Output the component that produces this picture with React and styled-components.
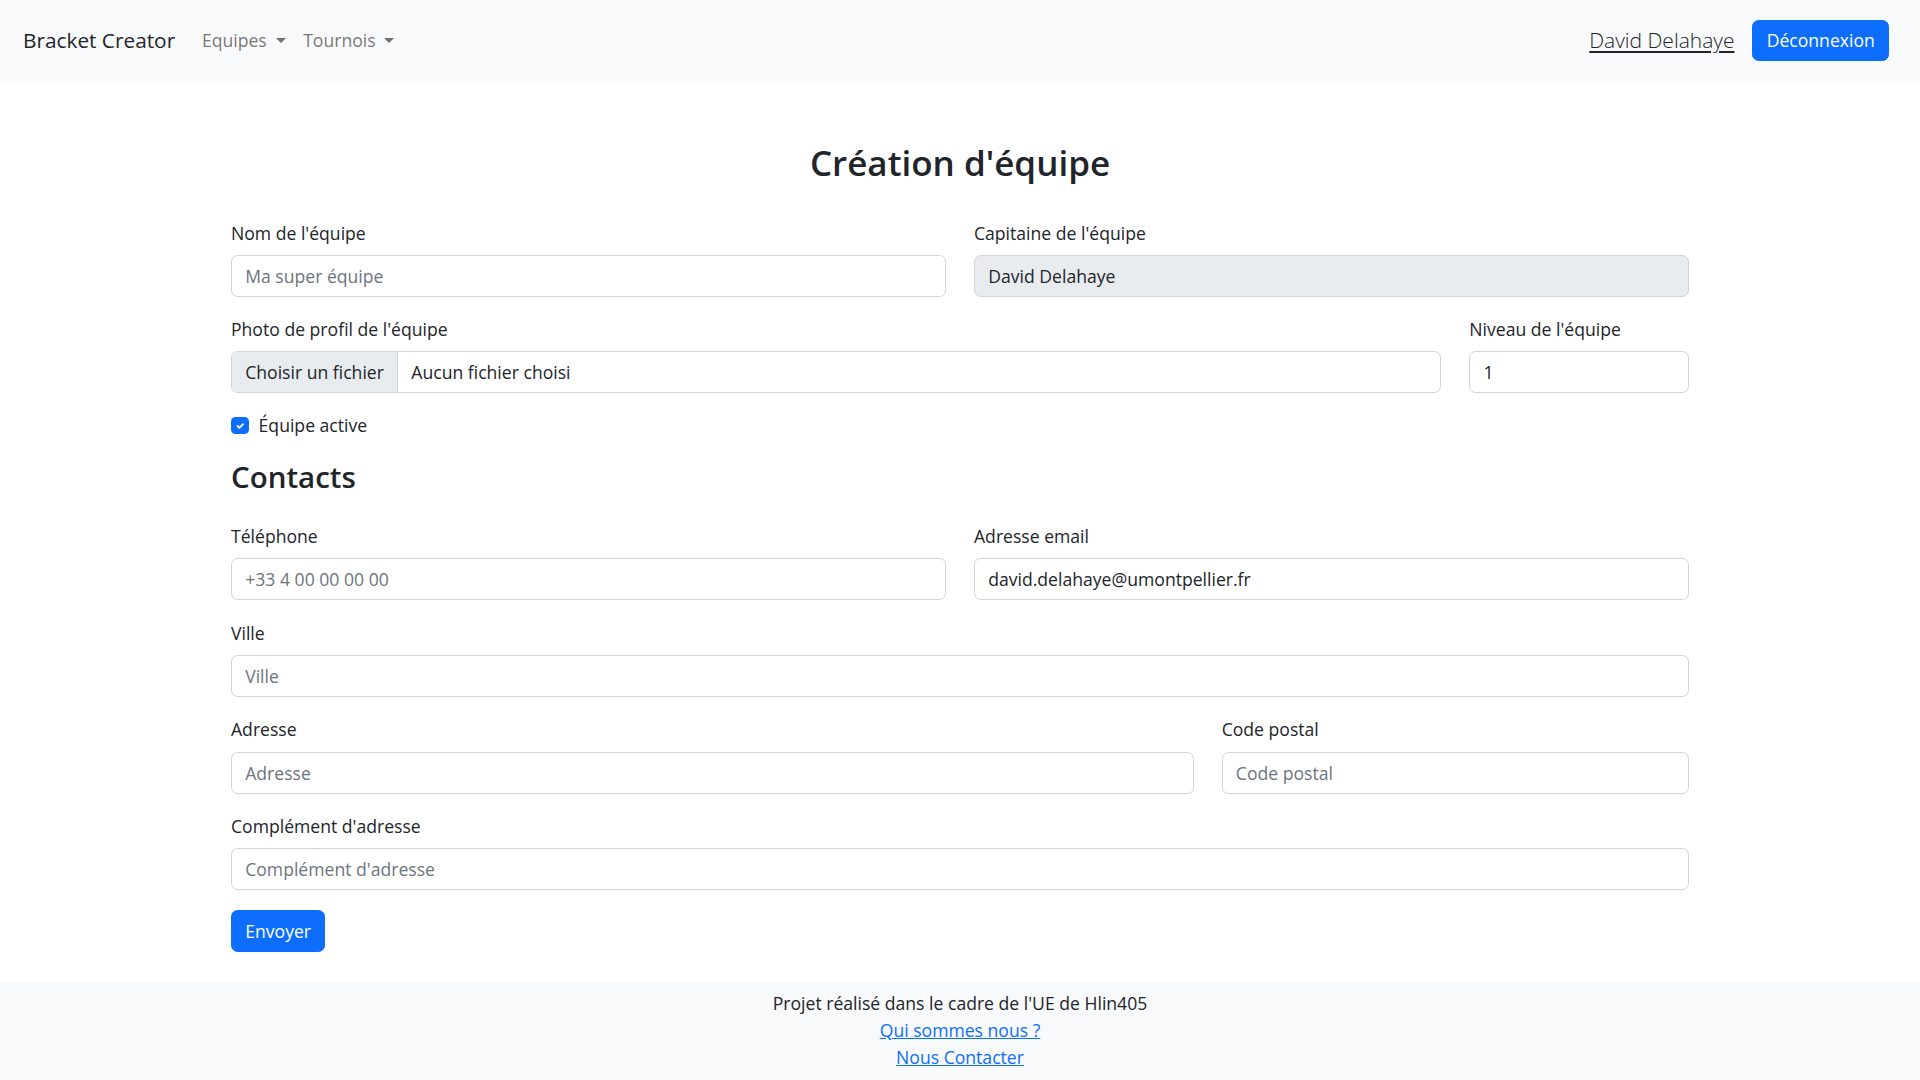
import React from "react";
import styled, { createGlobalStyle } from "styled-components";

const GlobalStyle = createGlobalStyle`
  *, *::before, *::after {
    box-sizing: border-box;
  }
  body {
    margin: 0;
    font-family: "Open Sans", "Noto Sans", sans-serif;
    font-size: 17.6px;
    line-height: 26.4px;
    color: #212529;
    background-color: #fff;
  }
`;

const Navbar = styled.nav`
  display: flex;
  align-items: center;
  justify-content: space-between;
  height: 81px;
  padding: 0 31px 0 23px;
  background-color: #f8f9fa;
`;

const NavGroup = styled.div`
  display: flex;
  align-items: center;
  gap: ${(props) => props.gap || 0}px;
`;

const Brand = styled.a`
  font-size: 20.8px;
  line-height: 33px;
  color: #212529;
  text-decoration: none;
  margin-right: 18px;
`;

const NavLink = styled.a`
  padding: 0 8.8px;
  color: rgba(0, 0, 0, 0.55);
  text-decoration: none;
  &::after {
    content: "";
    display: inline-block;
    margin-left: 0.5em;
    vertical-align: 0.255em;
    border-top: 0.3em solid;
    border-right: 0.3em solid transparent;
    border-left: 0.3em solid transparent;
  }
`;

const UserLink = styled.a`
  font-size: 21px;
  font-weight: 300;
  line-height: 33px;
  color: #212529;
  text-decoration: underline;
  text-underline-offset: 3px;
`;

const Button = styled.button`
  font-family: inherit;
  font-size: 17.6px;
  line-height: 26.4px;
  padding: 6.6px 13.2px;
  color: #fff;
  background-color: #0d6efd;
  border: 1px solid #0d6efd;
  border-radius: 6.6px;
  cursor: pointer;
`;

const Main = styled.main`
  width: 1458px;
  margin: 0 auto;
  padding: 58px 0 30px;
`;

const Title = styled.h1`
  margin: 0 0 33px;
  text-align: center;
  font-size: 35px;
  line-height: 48px;
  font-weight: 600;
`;

const SectionTitle = styled.h3`
  margin: 19.5px 0 27.5px;
  font-size: 29.5px;
  line-height: 37px;
  font-weight: 600;
`;

const Row = styled.div`
  display: grid;
  grid-template-columns: repeat(12, 1fr);
  column-gap: 28px;
`;

const Field = styled.div`
  grid-column: span ${(props) => props.span || 12};
  margin-bottom: ${(props) => (props.tight ? 18.4 : 19.6)}px;
`;

const Label = styled.label`
  display: block;
  margin-bottom: 8.8px;
`;

const Input = styled.input`
  display: block;
  width: 100%;
  height: 42px;
  padding: 0 13.2px;
  font-family: inherit;
  font-size: 17.6px;
  color: #212529;
  background-color: ${(props) => (props.disabled ? "#e9ecef" : "#fff")};
  border: 1px solid #ced4da;
  border-radius: 6.6px;
  &::placeholder {
    color: #6c757d;
  }
`;

const FileBox = styled.div`
  display: flex;
  align-items: center;
  height: 42px;
  border: 1px solid #ced4da;
  border-radius: 6.6px;
  overflow: hidden;
`;

const FileButton = styled.span`
  display: flex;
  align-items: center;
  height: 100%;
  padding: 0 13.2px;
  background-color: #e9ecef;
  border-right: 1px solid #ced4da;
`;

const FileName = styled.span`
  padding-left: 13.2px;
`;

const CheckRow = styled.div`
  display: flex;
  align-items: center;
  gap: 10px;
`;

const CheckBox = styled.span`
  display: inline-flex;
  align-items: center;
  justify-content: center;
  width: 17.6px;
  height: 17.6px;
  background-color: #0d6efd;
  border-radius: 4.4px;
`;

const Footer = styled.footer`
  display: flex;
  flex-direction: column;
  align-items: center;
  padding: 8px 0 11px;
  line-height: 27px;
  background-color: #f8f9fa;
`;

const FooterLink = styled.a`
  color: #0d6efd;
  text-decoration: underline;
`;

export default function App() {
  return (
    <>
      <GlobalStyle />
      <Navbar>
        <NavGroup>
          <Brand href="#">Bracket Creator</Brand>
          <NavLink href="#">Equipes</NavLink>
          <NavLink href="#">Tournois</NavLink>
        </NavGroup>
        <NavGroup gap={18}>
          <UserLink href="#">David Delahaye</UserLink>
          <Button>Déconnexion</Button>
        </NavGroup>
      </Navbar>

      <Main>
        <Title>Création d'équipe</Title>
        <Row>
          <Field span={6} tight>
            <Label>Nom de l'équipe</Label>
            <Input placeholder="Ma super équipe" />
          </Field>
          <Field span={6} tight>
            <Label>Capitaine de l'équipe</Label>
            <Input disabled value="David Delahaye" readOnly />
          </Field>
          <Field span={10}>
            <Label>Photo de profil de l'équipe</Label>
            <FileBox>
              <FileButton>Choisir un fichier</FileButton>
              <FileName>Aucun fichier choisi</FileName>
            </FileBox>
          </Field>
          <Field span={2}>
            <Label>Niveau de l'équipe</Label>
            <Input type="number" defaultValue="1" />
          </Field>
        </Row>
        <CheckRow>
          <CheckBox>
            <svg width="12" height="12" viewBox="0 0 20 20">
              <path
                d="M6 10l3 3 6-6"
                fill="none"
                stroke="#fff"
                strokeWidth="3"
                strokeLinecap="round"
                strokeLinejoin="round"
              />
            </svg>
          </CheckBox>
          <span>Équipe active</span>
        </CheckRow>

        <SectionTitle>Contacts</SectionTitle>
        <Row>
          <Field span={6}>
            <Label>Téléphone</Label>
            <Input placeholder="+33 4 00 00 00 00" />
          </Field>
          <Field span={6}>
            <Label>Adresse email</Label>
            <Input defaultValue="david.delahaye@umontpellier.fr" />
          </Field>
          <Field span={12}>
            <Label>Ville</Label>
            <Input placeholder="Ville" />
          </Field>
          <Field span={8}>
            <Label>Adresse</Label>
            <Input placeholder="Adresse" />
          </Field>
          <Field span={4}>
            <Label>Code postal</Label>
            <Input placeholder="Code postal" />
          </Field>
          <Field span={12}>
            <Label>Complément d'adresse</Label>
            <Input placeholder="Complément d'adresse" />
          </Field>
        </Row>
        <Button>Envoyer</Button>
      </Main>

      <Footer>
        <span>Projet réalisé dans le cadre de l'UE de Hlin405</span>
        <FooterLink href="#">Qui sommes nous ?</FooterLink>
        <FooterLink href="#">Nous Contacter</FooterLink>
      </Footer>
    </>
  );
}
